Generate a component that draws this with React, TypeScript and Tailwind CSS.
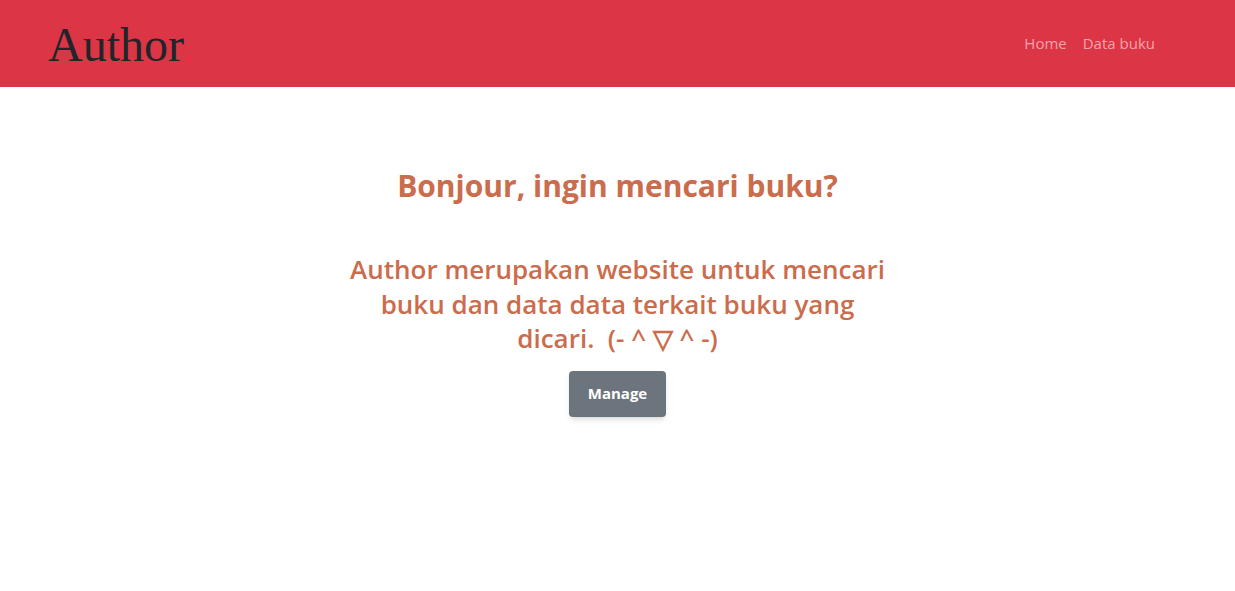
import React from 'react';

const App: React.FC = () => {
    const links = ['Home', 'Data buku'];

    return (
        <div className="min-h-screen bg-white" style={{ fontFamily: '"Open Sans", "Noto Sans", sans-serif' }}>
            <header className="h-[87px] bg-[#dc3545] flex items-center justify-between pl-[48px] pr-[80px]">
                <a className="text-[48px] leading-none text-[#212529] pt-[3px]" style={{ fontFamily: '"Liberation Serif", serif' }}>Author</a>
                <nav className="flex items-center gap-[16px] text-[15px] text-[#f2a4ab]">
                    {links.map(l => (
                        <a key={l}>{l}</a>
                    ))}
                </nav>
            </header>

            <main className="flex flex-col items-center text-center text-[#cb6c4c]">
                <h2 className="mt-[81px] text-[30px] font-bold leading-[1.2]">Bonjour, ingin mencari buku?</h2>
                <h3 className="mt-[48px] w-[560px] text-[26px] font-semibold leading-[34.5px]">
                    Author merupakan website untuk mencari buku dan data data terkait buku yang dicari.&nbsp; (-&nbsp;^&nbsp;▽&nbsp;^&nbsp;-)
                </h3>
                <button className="mt-[15px] w-[97px] h-[46px] rounded-[4px] bg-[#6c757d] text-white text-[15px] font-bold shadow-md">Manage</button>
            </main>
        </div>
    );
};

export default App;
